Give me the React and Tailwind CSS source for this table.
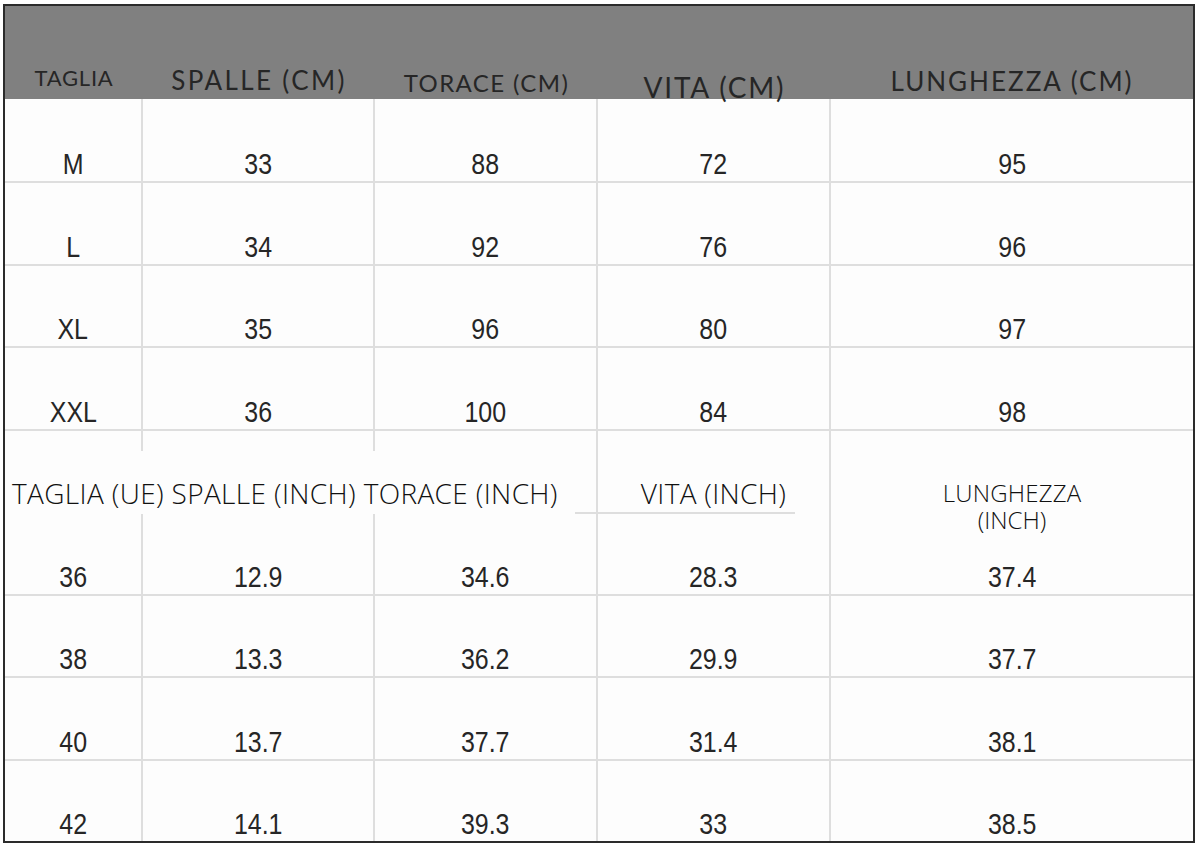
import clsx from "clsx";

const colW = ["w-[138px]", "w-[232px]", "w-[223px]", "w-[233px]", "w-[362px]"];

const cmHead = [
  { label: "TAGLIA", cls: "pt-[61px] text-[22px] tracking-[0.8px]" },
  { label: "SPALLE (CM)", cls: "pt-[61px] text-[26px] tracking-[2.4px]" },
  { label: "TORACE (CM)", cls: "pt-[65px] text-[24px] tracking-[1.4px]" },
  { label: "VITA (CM)", cls: "pt-[67px] text-[28px] tracking-[1.8px]" },
  { label: "LUNGHEZZA (CM)", cls: "pt-[62px] text-[26px] tracking-[2px]" },
];

const cmRows = [
  { h: "h-[84px]", v: ["M", "33", "88", "72", "95"] },
  { h: "h-[83px]", v: ["L", "34", "92", "76", "96"] },
  { h: "h-[82px]", v: ["XL", "35", "96", "80", "97"] },
  { h: "h-[83px]", v: ["XXL", "36", "100", "84", "98"] },
];

const inchRows = [
  { h: "h-[82px]", v: ["36", "12.9", "34.6", "28.3", "37.4"] },
  { h: "h-[82px]", v: ["38", "13.3", "36.2", "29.9", "37.7"] },
  { h: "h-[83px]", v: ["40", "13.7", "37.7", "31.4", "38.1"] },
  { h: "h-[80px]", v: ["42", "14.1", "39.3", "33", "38.5"], last: true },
];

function Row({ h, v, last }) {
  return (
    <div className={clsx("flex", h, !last && "border-b-2 border-[#dedede]")}>
      {v.map((t, i) => (
        <div
          key={i}
          className={clsx(
            colW[i],
            "flex items-end justify-center pb-[2px]",
            i < 4 && "border-r-2 border-[#dedede]"
          )}
        >
          <span className="inline-block scale-x-[0.86] text-[29px] leading-none text-[#262626]">
            {t}
          </span>
        </div>
      ))}
    </div>
  );
}

export default function App() {
  return (
    <div className="min-h-screen bg-white pt-[4px] pl-[3px] font-['Liberation_Sans',Arial,sans-serif]">
      <div className="flex w-[1192px] h-[839px] flex-col border-2 border-[#2b2b2b] bg-[#fdfdfd]">

        {/* grey header band */}
        <div className="flex h-[93px] shrink-0 bg-[#808080]">
          {cmHead.map((c, i) => (
            <div key={i} className={clsx(colW[i], "flex justify-center")}>
              <span className={clsx("font-['Lato',sans-serif] leading-none text-[#262626]", c.cls)}>
                {c.label}
              </span>
            </div>
          ))}
        </div>

        {cmRows.map((r, i) => (
          <Row key={i} {...r} />
        ))}

        {/* inch header row */}
        <div className="flex h-[83px] shrink-0 font-['Open_Sans',sans-serif] font-light text-[#111]">
          <div className="flex w-[593px] flex-col border-r-2 border-[#dedede]">
            <div className="flex h-[20px]">
              <div className="w-[138px] border-r-2 border-[#dedede]" />
              <div className="w-[232px] border-r-2 border-[#dedede]" />
            </div>
            <div className="mt-[28px] pl-[7px] text-[28px] leading-none tracking-[0.35px] whitespace-nowrap">
              TAGLIA (UE) SPALLE (INCH) TORACE (INCH)
            </div>
            <div className="mt-auto flex justify-end">
              <div className="h-[2px] w-[21px] bg-[#dedede]" />
            </div>
          </div>
          <div className="flex w-[233px] flex-col border-r-2 border-[#dedede]">
            <div className="mt-[48px] text-center text-[28px] leading-none tracking-[0.3px]">VITA (INCH)</div>
            <div className="mt-auto h-[2px] w-[197px] bg-[#dedede]" />
          </div>
          <div className="flex w-[362px] flex-col items-center">
            <div className="mt-[50px] text-[24px] leading-none tracking-[0.2px]">LUNGHEZZA</div>
            <div className="mt-[3px] text-[24px] leading-none">(INCH)</div>
            <div className="mt-auto h-[2px] w-[83px] self-end bg-[#dedede]" />
          </div>
        </div>

        {inchRows.map((r, i) => (
          <Row key={i} {...r} />
        ))}
      </div>
    </div>
  );
}
